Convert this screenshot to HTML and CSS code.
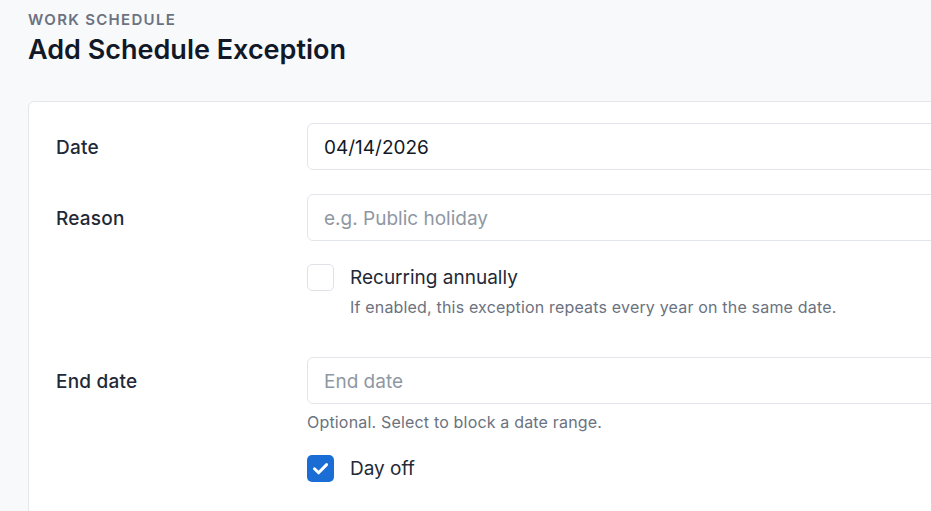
FILE: index.html
```html
<!DOCTYPE html>
<html lang="en">
<head>
<meta charset="utf-8">
<title>Add Schedule Exception</title>
<link rel="stylesheet" href="styles.css">
</head>
<body>
<div class="page">
  <header class="page-header">
    <div class="overline">Work Schedule</div>
    <h1 class="title">Add Schedule Exception</h1>
  </header>
  <section class="card">
    <div class="row">
      <label class="label">Date</label>
      <div class="input"><span class="value">04/14/2026</span></div>
    </div>
    <div class="row row-reason">
      <label class="label">Reason</label>
      <div class="input"><span class="placeholder">e.g. Public holiday</span></div>
    </div>
    <div class="row row-check">
      <div></div>
      <div class="check-item">
        <span class="checkbox"></span>
        <div class="check-text">
          <div class="check-label">Recurring annually</div>
          <div class="help help-check">If enabled, this exception repeats every year on the same date.</div>
        </div>
      </div>
    </div>
    <div class="row row-end">
      <label class="label">End date</label>
      <div class="input"><span class="placeholder">End date</span></div>
    </div>
    <div class="row row-help">
      <div></div>
      <div class="help">Optional. Select to block a date range.</div>
    </div>
    <div class="row row-dayoff">
      <div></div>
      <div class="check-item">
        <span class="checkbox checked">
          <svg viewBox="0 0 27 27" width="27" height="27" aria-hidden="true"><path d="M7.5 13.8 L11.6 17.8 L19.6 9.6" fill="none" stroke="#fff" stroke-width="3" stroke-linecap="round" stroke-linejoin="round"/></svg>
        </span>
        <div class="check-text">
          <div class="check-label">Day off</div>
        </div>
      </div>
    </div>
  </section>
</div>
</body>
</html>
```
FILE: styles.css
```css
html, body {
  margin: 0;
  padding: 0;
  overflow: hidden;
}
body {
  background: #f8f9fb;
  font-family: Inter, "Noto Sans", sans-serif;
  color: #1f2937;
  width: 931px;
  height: 511px;
}
.page {
  padding: 11px 0 0 28px;
}
.page-header {
  height: 90px;
}
.overline {
  font-size: 15px;
  font-weight: 600;
  letter-spacing: 1.3px;
  text-transform: uppercase;
  color: #6b7280;
  line-height: 18px;
}
.title {
  margin: 2px 0 0 0;
  font-size: 27px;
  font-weight: 600;
  color: #111827;
  line-height: 38px;
}
.card {
  width: 1100px;
  background: #ffffff;
  border: 1px solid #e5e7eb;
  border-radius: 6px;
  padding: 21px 27px 40px 27px;
}
.row {
  display: grid;
  grid-template-columns: 223px 1fr;
  column-gap: 28px;
  align-items: center;
}
.label {
  font-size: 19px;
  font-weight: 500;
  letter-spacing: 0.2px;
  color: #1f2937;
  line-height: 24px;
  padding-top: 2px;
}
.input {
  height: 44px;
  border: 1px solid #e2e5ea;
  border-radius: 6px;
  background: #fff;
  display: flex;
  align-items: center;
  padding: 1px 16px 0 16px;
  font-size: 19px;
}
.value { color: #111827; }
.placeholder { color: #8f97a3; }
.row-reason { margin-top: 24px; }
.row-check { margin-top: 23px; align-items: start; }
.check-item {
  display: flex;
  align-items: flex-start;
  gap: 16px;
}
.checkbox {
  flex: none;
  width: 25px;
  height: 25px;
  border: 1px solid #dfe2e7;
  border-radius: 5px;
  background: #fff;
  display: block;
}
.checkbox.checked {
  width: 27px;
  height: 27px;
  border: none;
  background: #1a6dd4;
}
.checkbox svg { display: block; }
.check-label {
  font-size: 19px;
  line-height: 27px;
  color: #1f2937;
}
.help {
  font-size: 16px;
  letter-spacing: 0.18px;
  line-height: 22px;
  color: #6b7280;
}
.help-check { margin-top: 5px; }
.row-end { margin-top: 39px; }
.row-help { margin-top: 7px; }
.row-dayoff { margin-top: 22px; }
```
